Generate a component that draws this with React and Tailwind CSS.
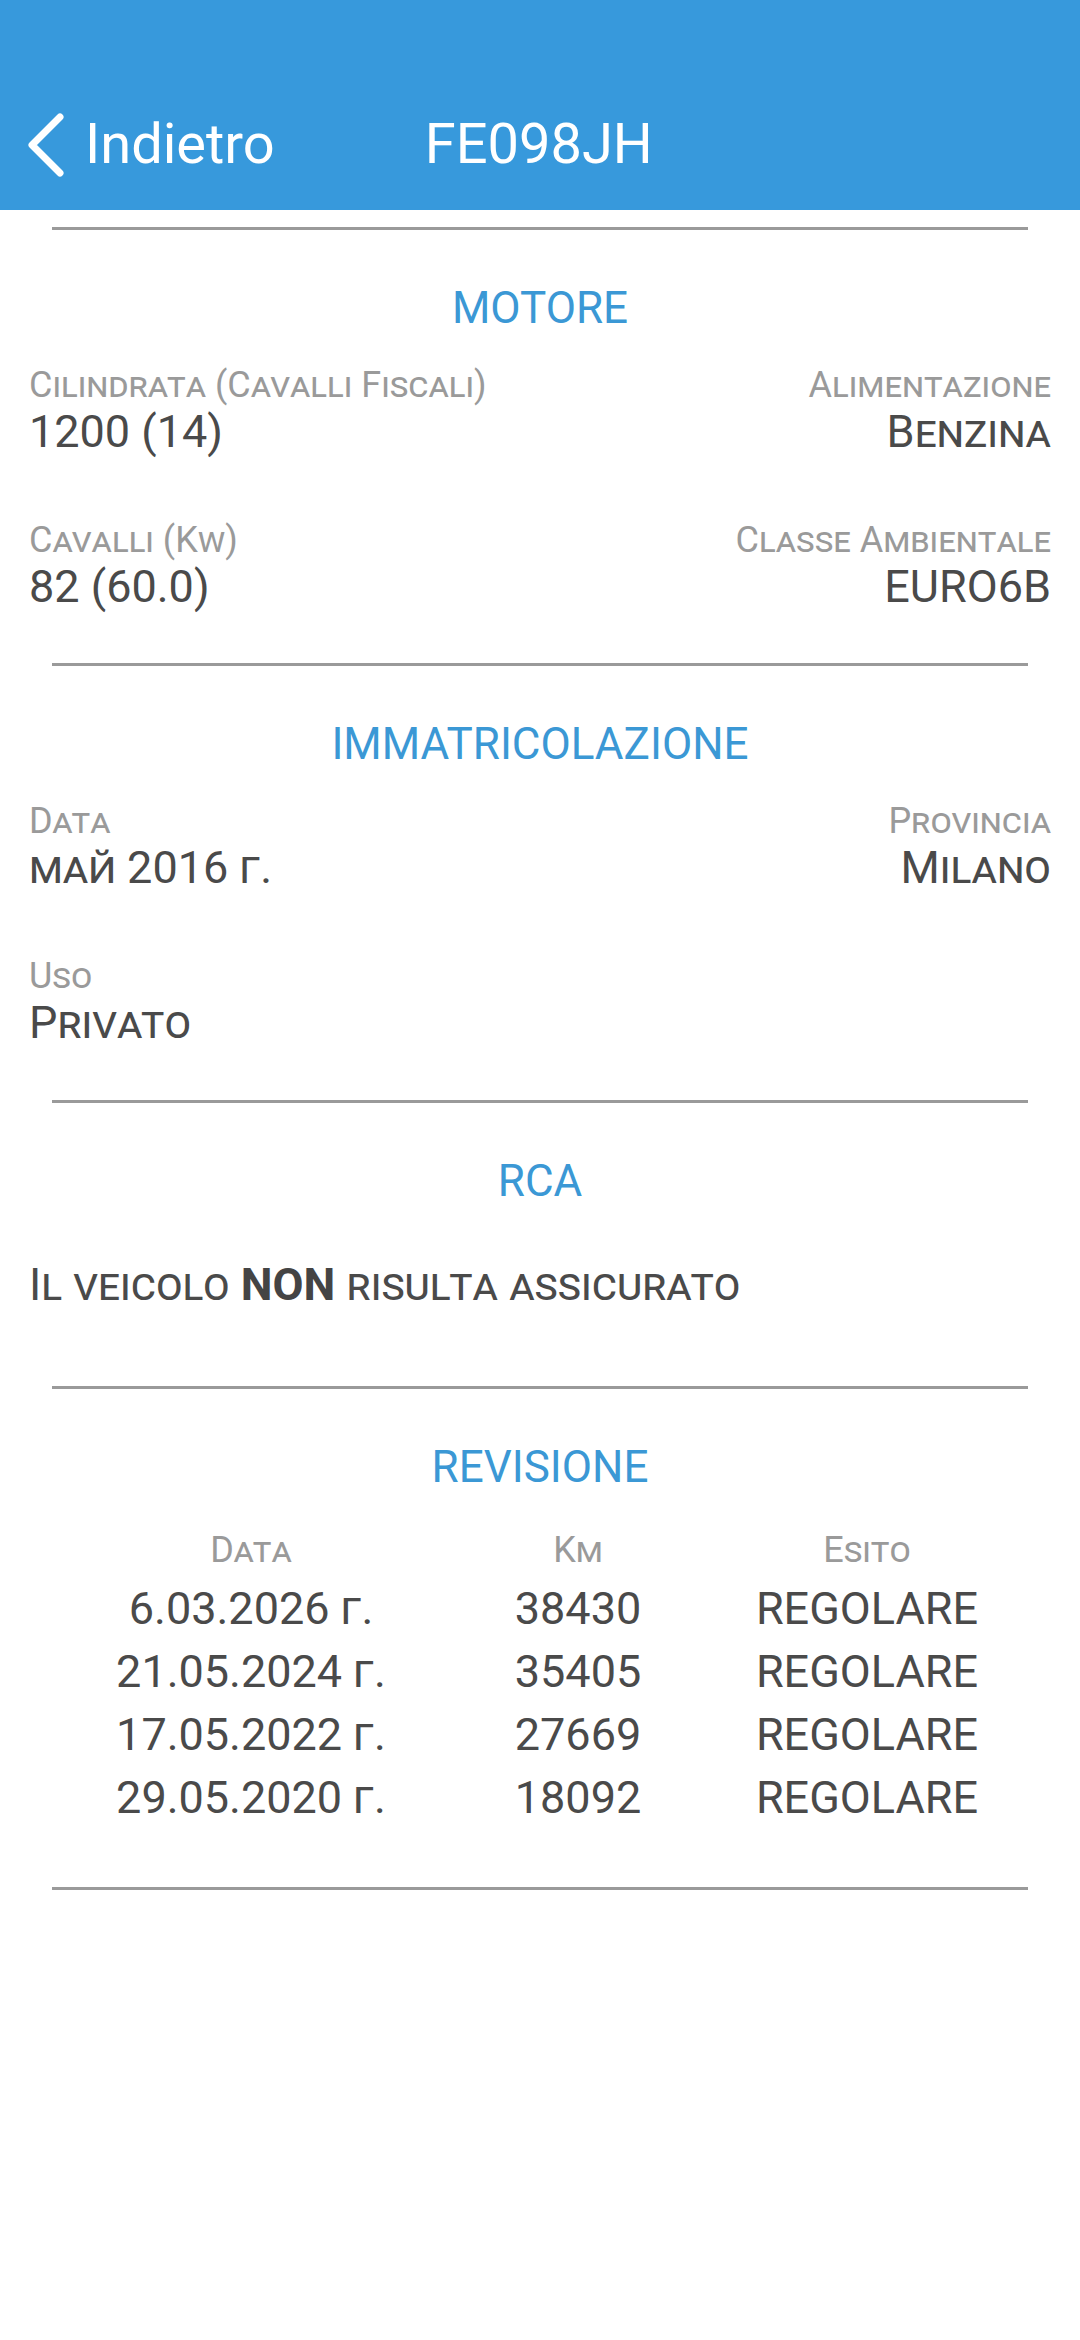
const motore = [
  [
    { label: "Cilindrata (Cavalli Fiscali)", value: "1200 (14)" },
    { label: "Alimentazione", value: "Benzina" },
  ],
  [
    { label: "Cavalli (Kw)", value: "82 (60.0)" },
    { label: "Classe Ambientale", value: "EURO6B" },
  ],
];

const immatricolazione = [
  [
    { label: "Data", value: "май 2016 г." },
    { label: "Provincia", value: "Milano" },
  ],
  [{ label: "Uso", value: "Privato" }, null],
];

const revisioni = [
  { data: "6.03.2026 г.", km: "38430", esito: "REGOLARE" },
  { data: "21.05.2024 г.", km: "35405", esito: "REGOLARE" },
  { data: "17.05.2022 г.", km: "27669", esito: "REGOLARE" },
  { data: "29.05.2020 г.", km: "18092", esito: "REGOLARE" },
];

function Divider({ className = "" }) {
  return <div className={"mx-[52px] h-[3px] bg-[#9a9a9a] " + className} />;
}

function SectionTitle({ children }) {
  return (
    <h2 className="mt-[56px] text-center text-[44px] leading-none text-[#3b98d5]">
      {children}
    </h2>
  );
}

function Field({ item, right }) {
  if (!item) return <div />;
  return (
    <div className={right ? "text-right" : ""}>
      <div className="text-[36px] leading-none text-[#9a9a9a] [font-variant-caps:small-caps]">
        {item.label}
      </div>
      <div className="mt-[6px] text-[45px] leading-none text-[#4a4a4a] [font-variant-caps:small-caps]">
        {item.value}
      </div>
    </div>
  );
}

function FieldRows({ rows }) {
  return (
    <div className="px-[29px]">
      {rows.map((row, i) => (
        <div
          key={i}
          className={"flex justify-between " + (i === 0 ? "mt-[37px]" : "mt-[68px]")}
        >
          <Field item={row[0]} />
          <Field item={row[1]} right />
        </div>
      ))}
    </div>
  );
}

export default function App() {
  return (
    <div className="min-h-[2340px] w-[1080px] bg-white font-['Roboto',sans-serif]">
      <header className="h-[210px] bg-[#3799dc] pt-[116px] text-white">
        <div className="flex items-start">
          <svg width="40" height="64" viewBox="0 0 40 64" className="ml-[24px] mt-[-3px]">
            <polyline
              points="36,4 8,32 36,60"
              fill="none"
              stroke="white"
              strokeWidth="7"
              strokeLinecap="round"
              strokeLinejoin="round"
            />
          </svg>
          <span className="ml-[21px] text-[56px] leading-none">Indietro</span>
          <span className="ml-[150px] text-[56px] leading-none">FE098JH</span>
        </div>
      </header>

      <Divider className="mt-[17px]" />
      <SectionTitle>MOTORE</SectionTitle>
      <FieldRows rows={motore} />

      <Divider className="mt-[54px]" />
      <SectionTitle>IMMATRICOLAZIONE</SectionTitle>
      <FieldRows rows={immatricolazione} />

      <Divider className="mt-[55px]" />
      <SectionTitle>RCA</SectionTitle>
      <p className="mt-[59px] px-[29px] text-[45px] leading-none text-[#4a4a4a] [font-variant-caps:small-caps]">
        Il veicolo <b className="font-bold text-[#444]">NON</b> risulta assicurato
      </p>

      <Divider className="mt-[79px]" />
      <SectionTitle>REVISIONE</SectionTitle>
      <div className="ml-[86px] mt-[43px] grid w-[908px] grid-cols-[330px_324px_254px] text-center">
        <div className="text-[36px] leading-none text-[#9a9a9a] [font-variant-caps:small-caps]">Data</div>
        <div className="text-[36px] leading-none text-[#9a9a9a] [font-variant-caps:small-caps]">Km</div>
        <div className="text-[36px] leading-none text-[#9a9a9a] [font-variant-caps:small-caps]">Esito</div>
      </div>
      <div className="ml-[86px] mt-[9px] w-[908px] text-center text-[45px] leading-[63px] text-[#4a4a4a] [font-variant-caps:small-caps]">
        {revisioni.map((r) => (
          <div key={r.data} className="grid grid-cols-[330px_324px_254px]">
            <div>{r.data}</div>
            <div>{r.km}</div>
            <div>{r.esito}</div>
          </div>
        ))}
      </div>

      <Divider className="mt-[58px]" />
    </div>
  );
}
